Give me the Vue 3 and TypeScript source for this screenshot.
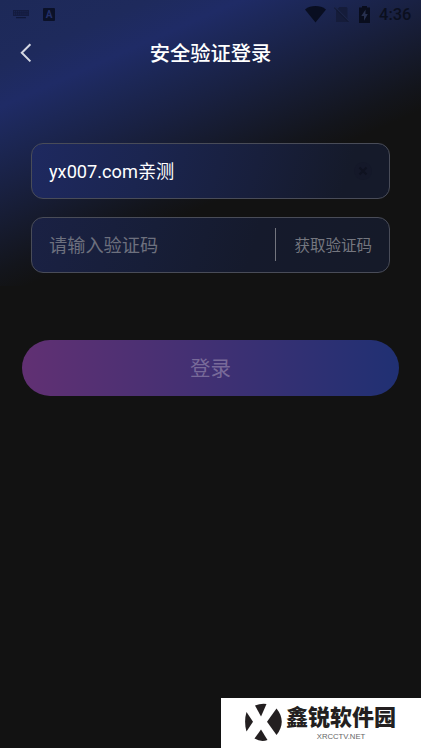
<script setup lang="ts">
import { ref } from 'vue'

const account = ref('yx007.com亲测')
const code = ref('')
const keyCols = [0, 1, 2, 3, 4, 5, 6]
</script>

<template>
  <main class="screen">
    <header class="status">
      <svg class="keyboard" width="16" height="9" viewBox="0 0 16 9">
        <rect width="16" height="6" fill="#141c40" />
        <g fill="#1c2754">
          <rect v-for="c in keyCols" :key="c" :x="1 + c * 2.1" y="1.2" width="1" height="1" />
          <rect v-for="c in keyCols" :key="'b' + c" :x="1 + c * 2.1" y="3.5" width="1" height="1" />
        </g>
        <rect x="3" y="7" width="10" height="1.2" rx=".5" fill="#10183a" />
      </svg>
      <span class="ime">A</span>
      <span class="spacer"></span>
      <svg class="wifi" width="21" height="17" viewBox="0 0 21 17">
        <path d="M0 3.4C6-1 15-1 21 3.4L10.5 16.5Z" fill="#090e21" />
      </svg>
      <svg class="sim" width="15" height="17" viewBox="0 0 15 17">
        <path d="M5.5 1H12q1.500 0 1.500 1.500V16H2V4.500Z" fill="#151c3a" />
        <path d="M1 1L15 15" stroke="#1c2548" stroke-width="1.2" />
        <path d="M0 1.500L14.500 16" stroke="#10162e" stroke-width="1" />
      </svg>
      <svg class="battery" width="11" height="17" viewBox="0 0 11 17">
        <path d="M3 0H8V1.500H11V17H0V1.500H3Z" fill="#090d1d" />
        <path d="M6.600 3.500L2.300 10H5V14.800L8.800 8H6.400Z" fill="#27304f" />
      </svg>
      <time class="clock">4:36</time>
    </header>

    <nav class="nav">
      <button class="back" aria-label="返回">
        <svg width="12" height="20" viewBox="0 0 12 20" fill="none" stroke="#d5d8e3" stroke-width="2">
          <path d="M10.400 1.200L1.800 9.800L10.400 18.400" />
        </svg>
      </button>
      <h1>安全验证登录</h1>
    </nav>

    <form class="form" @submit.prevent>
      <div class="field account">
        <input v-model="account" type="text" />
        <button type="button" class="clear" aria-label="清除" @click="account = ''">
          <svg width="18" height="18" viewBox="0 0 18 18">
            <circle cx="9" cy="9" r="9" fill="#141829" />
            <path d="M5.500 5.500L12.500 12.500M12.500 5.500L5.500 12.500" stroke="#0f1220" stroke-width="2" />
          </svg>
        </button>
      </div>
      <div class="field code">
        <input v-model="code" type="text" placeholder="请输入验证码" />
        <i class="divider"></i>
        <button type="button" class="send">获取验证码</button>
      </div>
      <button class="login">登录</button>
    </form>

    <aside class="brand">
      <svg class="mark" width="38" height="39" viewBox="0 0 38 39" fill="#231f20">
        <path d="M10 2.500Q15.500 .3 21.500 1L16 13.500Z" />
        <path d="M1.500 9L8 18.700L1.500 28.500Q-1.300 18.500 1.500 9Z" />
        <path d="M31.500 5.500Q42 18.500 31.500 32L22 18.700Z" />
        <path d="M16 26.500L22.500 37Q16 39.500 9.500 35.500Z" />
      </svg>
      <div class="names">
        <strong>鑫锐软件园</strong>
        <small>XRCCTV.NET</small>
      </div>
    </aside>
  </main>
</template>

<style>
body {
  margin: 0;
  background: #121212;
}
</style>

<style scoped>
.screen {
  position: relative;
  box-sizing: border-box;
  width: 421px;
  height: 748px;
  overflow: hidden;
  font-family: Roboto, "Noto Sans CJK SC", sans-serif;
  background:
    linear-gradient(156deg, #1d2958 0, #1e2a5c 60px, #1f2b66 98px, #1c2756 130px, #192143 170px, #161b2f 210px, #13151c 248px, #121212 272px) 0 0 / 421px 286px no-repeat,
    #121212;
}

button {
  display: flex;
  margin: 0;
  padding: 0;
  border: 0;
  background: none;
  font-family: inherit;
}

.status {
  display: flex;
  box-sizing: border-box;
  height: 28px;
  align-items: center;
  padding: 0 10px 0 13px;
}

.ime {
  width: 12px;
  height: 13px;
  margin-left: 14px;
  border-radius: 1px;
  background: #0b1128;
  color: #23306a;
  font-size: 10px;
  font-weight: 700;
  line-height: 13px;
  text-align: center;
}

.spacer {
  flex: 1;
}

.sim {
  margin-left: 8px;
}

.battery {
  margin-left: 10px;
}

.clock {
  width: 32px;
  margin-left: 9px;
  color: #0b0f1e;
  font-size: 16.5px;
  font-weight: 500;
  line-height: 28px;
  padding-top: 1px;
  white-space: nowrap;
}

.nav {
  display: grid;
  grid-template-columns: 60px 1fr 60px;
  height: 50px;
  align-items: center;
}

.back {
  padding-left: 20px;
}

h1 {
  margin: 0;
  padding-top: 2px;
  color: #fff;
  font-size: 20.3px;
  font-weight: 500;
  line-height: 30px;
  text-align: center;
}

.form {
  display: flex;
  flex-direction: column;
  gap: 18px;
  padding: 65px 22px 0;
}

.field {
  display: flex;
  box-sizing: border-box;
  height: 56px;
  margin: 0 9px;
  align-items: center;
  padding: 0 17px;
  border: 1px solid #494c58;
  border-radius: 12px;
}

.account {
  background: linear-gradient(108deg, #1e2960 0, #1b2550 110px, #181f3c 220px, #151a2a 310px);
}

.account input {
  padding-bottom: 3px;
}

.code {
  background: linear-gradient(108deg, #1a2144 0, #171e38 120px, #151a2c 220px, #151a29 340px);
}

input {
  box-sizing: border-box;
  flex: 1;
  min-width: 0;
  height: 30px;
  padding: 0;
  border: 0;
  outline: 0;
  background: none;
  color: #fff;
  font-family: inherit;
  font-size: 18.2px;
}

input::placeholder {
  color: #6d707e;
  opacity: 1;
}

.divider {
  width: 1px;
  height: 33px;
  margin-bottom: 1px;
  background: #73757e;
}

.send {
  margin-left: 18px;
  padding-top: 2px;
  color: #74767f;
  font-size: 15.5px;
  line-height: 24px;
}

.login {
  height: 56px;
  margin-top: 49px;
  padding-bottom: 2px;
  align-items: center;
  justify-content: center;
  border-radius: 28px;
  background: linear-gradient(90deg, #613073, #203073);
  color: #786a99;
  font-size: 20.5px;
}

.brand {
  position: absolute;
  right: 0;
  bottom: 0;
  display: flex;
  box-sizing: border-box;
  width: 200px;
  height: 50px;
  gap: 3px;
  padding: 5px 0 0 24px;
  background: #fff;
  color: #231f20;
}

.names {
  display: flex;
  flex-direction: column;
  align-items: center;
}

strong {
  font-size: 22px;
  font-weight: 900;
  line-height: 29px;
  white-space: nowrap;
}

small {
  font-family: "Liberation Sans", sans-serif;
  font-size: 7.7px;
  line-height: 10px;
  color: #666;
}
</style>
